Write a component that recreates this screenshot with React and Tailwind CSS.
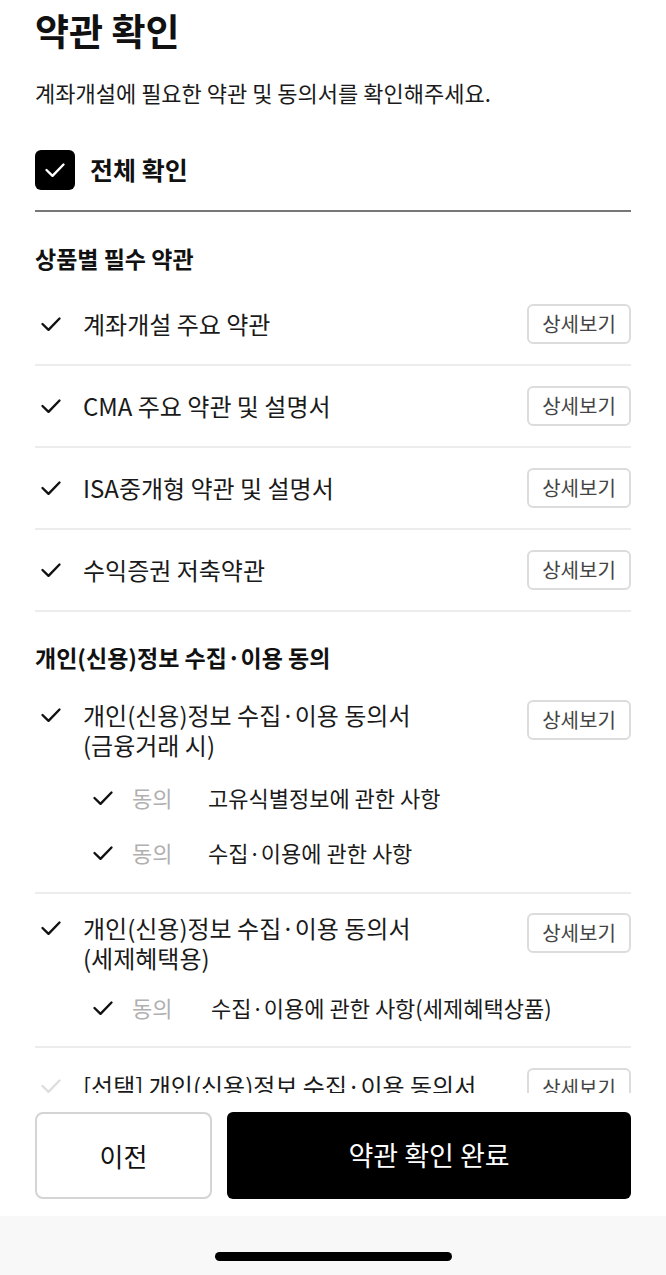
import React, { useState } from "react";

const FONT = { fontFamily: '"Noto Sans CJK KR", "Noto Sans", sans-serif' };

// 체크 아이콘
const Check = ({ color = "#111111", className = "" }) => (
  <svg
    className={className}
    width="22"
    height="16"
    viewBox="0 0 22 16"
    fill="none"
    stroke={color}
    strokeWidth="2.4"
    strokeLinecap="round"
    strokeLinejoin="round"
  >
    <path d="M2.5 8 L8.5 13.8 L19.5 2.5" />
  </svg>
);

const DetailButton = () => (
  <button className="shrink-0 w-[104px] h-10 rounded-[6px] border-2 border-[#dcdcdc] bg-white text-[20px] leading-none text-[#444]">
    상세보기
  </button>
);

// 단일 약관 행
const TermRow = ({ title }) => (
  <div className="flex items-center h-[82px] border-b-2 border-[#ececec]">
    <div className="w-[48px] flex items-center pl-[5px]">
      <Check />
    </div>
    <p className="flex-1 text-[24px] leading-[30px] text-[#1a1a1a]">{title}</p>
    <DetailButton />
  </div>
);

// 동의 하위 항목
const SubRow = ({ text, offset = false }) => (
  <div className="flex items-center h-[55px] pl-[57px]">
    <Check />
    <span className="w-[94px] pl-[18px] text-[22px] text-[#b0b0b0]">동의</span>
    <span className={`text-[22px] text-[#1a1a1a] ${offset ? "pl-[3px]" : ""}`}>
      {text}
    </span>
  </div>
);

const App = () => {
  const [allChecked, setAllChecked] = useState(true);

  const productTerms = [
    "계좌개설 주요 약관",
    "CMA 주요 약관 및 설명서",
    "ISA중개형 약관 및 설명서",
    "수익증권 저축약관",
  ];

  return (
    <div style={FONT} className="w-[666px] h-[1275px] bg-white flex flex-col overflow-hidden">
      {/* 스크롤 영역 */}
      <div className="h-[1093px] overflow-hidden px-[35px]">
        <h1 className="mt-[6px] text-[37px] leading-[48px] font-bold text-[#111]">약관 확인</h1>
        <p className="mt-[24px] text-[22px] leading-[28px] text-[#1a1a1a]">
          계좌개설에 필요한 약관 및 동의서를 확인해주세요.
        </p>

        <div className="flex items-center gap-[15px] mt-[44px]">
          <button
            onClick={() => setAllChecked((prev) => !prev)}
            className="w-10 h-10 rounded-[6px] bg-black flex items-center justify-center"
          >
            {allChecked && <Check color="#ffffff" />}
          </button>
          <span className="text-[25px] font-bold text-[#111]">전체 확인</span>
        </div>

        <div className="mt-[20px] h-[2px] bg-[#777]" />

        {/* 상품별 필수 약관 */}
        <h2 className="mt-[31px] text-[23px] leading-[30px] font-bold text-[#111]">상품별 필수 약관</h2>
        <div className="mt-[11px]">
          {productTerms.map((t) => (
            <TermRow key={t} title={t} />
          ))}
        </div>

        {/* 개인(신용)정보 */}
        <h2 className="mt-[30px] text-[23px] leading-[30px] font-bold text-[#111]">
          개인(신용)정보 수집·이용 동의
        </h2>
        <div className="mt-[11px] pt-[17px] pb-[12px] border-b-2 border-[#ececec]">
          <div className="flex items-start">
            <div className="w-[48px] h-[30px] flex items-center pl-[5px]">
              <Check />
            </div>
            <p className="flex-1 text-[24px] leading-[30px] text-[#1a1a1a]">
              개인(신용)정보 수집·이용 동의서
              <br />
              (금융거래 시)
            </p>
            <DetailButton />
          </div>
          <div className="mt-[10px]">
            <SubRow text="고유식별정보에 관한 사항" />
            <SubRow text="수집·이용에 관한 사항" />
          </div>
        </div>

        <div className="pt-[19px] pb-[11px] border-b-2 border-[#ececec]">
          <div className="flex items-start">
            <div className="w-[48px] h-[30px] flex items-center pl-[5px]">
              <Check />
            </div>
            <p className="flex-1 text-[24px] leading-[30px] text-[#1a1a1a]">
              개인(신용)정보 수집·이용 동의서
              <br />
              (세제혜택용)
            </p>
            <DetailButton />
          </div>
          <div className="mt-[7px]">
            <SubRow text="수집·이용에 관한 사항(세제혜택상품)" offset />
          </div>
        </div>

        <div className="pt-[20px] flex items-start">
          <div className="w-[48px] h-[30px] flex items-center pl-[5px] mt-[3px]">
            <Check color="#dedede" />
          </div>
          <p className="flex-1 text-[24px] leading-[30px] pt-[3px] text-[#1a1a1a]">
            [선택] 개인(신용)정보 수집·이용 동의서
          </p>
          <DetailButton />
        </div>
      </div>

      {/* 하단 버튼 */}
      <div className="flex gap-[15px] px-[35px] pt-[19px] pb-[17px] bg-white">
        <button className="w-[177px] h-[87px] rounded-[8px] border-2 border-[#d4d4d4] bg-white text-[26px] text-[#111]">
          이전
        </button>
        <button className="flex-1 h-[87px] rounded-[6px] bg-black text-[27px] text-white">
          약관 확인 완료
        </button>
      </div>

      <div className="flex-1 bg-[#f8f8f8] flex justify-center pt-[36px]">
        <div className="w-[237px] h-[9px] rounded-full bg-black" />
      </div>
    </div>
  );
};

export default App;
